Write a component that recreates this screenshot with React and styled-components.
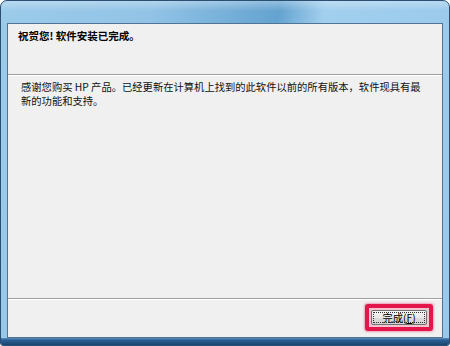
import React from 'react';
import styled, { createGlobalStyle } from 'styled-components';

const GlobalStyle = createGlobalStyle`
  html, body {
    margin: 0;
    padding: 0;
    background: #ffffff;
  }
  body {
    font-family: "Noto Sans CJK SC", "DejaVu Sans", sans-serif;
  }
`;

const Window = styled.div`
  box-sizing: border-box;
  width: 450px;
  height: 346px;
  display: flex;
  flex-direction: column;
  padding: 22px 6px 7px 6px;
  border: 1px solid #2a4f72;
  border-radius: 7px 7px 3px 3px;
  background:
    linear-gradient(180deg, rgba(255, 255, 255, 0.3) 0px, rgba(255, 255, 255, 0) 10px),
    linear-gradient(100deg, #9ccbea 0%, #92c3e6 30%, #64a3d0 55%, #a2cfee 64%, #98c8ea 100%);
  position: relative;
  overflow: hidden;

  &::after {
    content: '';
    position: absolute;
    left: 0;
    right: 0;
    bottom: 0;
    height: 7px;
    background: linear-gradient(180deg, #5f8fc0 0px, #2c5f94 2px, #19466f 7px);
  }
`;

const Client = styled.div`
  flex: 1;
  display: flex;
  flex-direction: column;
  background: #f0f0f0;
  border: 1px solid #4f7496;
  position: relative;
  z-index: 1;
`;

const Header = styled.div`
  height: 51px;
  padding: 5px 0 0 10px;
  box-sizing: border-box;
  border-bottom: 1px solid #a0a0a0;
  box-shadow: 0 1px 0 #ffffff;
`;

const Heading = styled.h1`
  margin: 0;
  font-size: 10.5px;
  line-height: 14px;
  font-weight: 700;
  color: #000;
`;

const Body = styled.div`
  flex: 1;
  padding: 5px 0 0 13px;
`;

const Text = styled.p`
  margin: 0;
  font-size: 10.3px;
  line-height: 13.5px;
  color: #111;
`;

const Footer = styled.div`
  height: 39px;
  box-sizing: border-box;
  border-top: 1px solid #a0a0a0;
  box-shadow: inset 0 1px 0 #ffffff;
  display: flex;
  justify-content: flex-end;
  align-items: center;
  padding: 0 9px 1px 0;
`;

const Highlight = styled.div`
  padding: 2px;
  border: 4px solid #e3154b;
  border-radius: 3px;
  background: #f3c3cf;
  box-shadow: 0 0 2px 1px rgba(240, 80, 120, 0.5);
  display: flex;
`;

const Button = styled.button`
  width: 56px;
  height: 15px;
  padding: 0;
  margin: 0;
  border: 1px solid #707070;
  border-radius: 2px;
  background: linear-gradient(180deg, #f6f6f6 0%, #e9e9e9 50%, #dcdcdc 51%, #d4d4d4 100%);
  display: flex;
  align-items: center;
  justify-content: center;
  font-family: inherit;
  font-size: 10.3px;
  line-height: 13px;
  color: #000;
  position: relative;

  &::before {
    content: '';
    position: absolute;
    inset: 1px;
    border: 1px dotted #333;
  }
`;

const Key = styled.span`
  text-decoration: underline;
`;

export default function App() {
  return (
    <>
      <GlobalStyle />
      <Window>
        <Client>
          <Header>
            <Heading>祝贺您! 软件安装已完成。</Heading>
          </Header>
          <Body>
            <Text>
              感谢您购买 HP 产品。已经更新在计算机上找到的此软件以前的所有版本，软件现具有最
              <br />
              新的功能和支持。
            </Text>
          </Body>
          <Footer>
            <Highlight>
              <Button>
                完成(<Key>F</Key>)
              </Button>
            </Highlight>
          </Footer>
        </Client>
      </Window>
    </>
  );
}
